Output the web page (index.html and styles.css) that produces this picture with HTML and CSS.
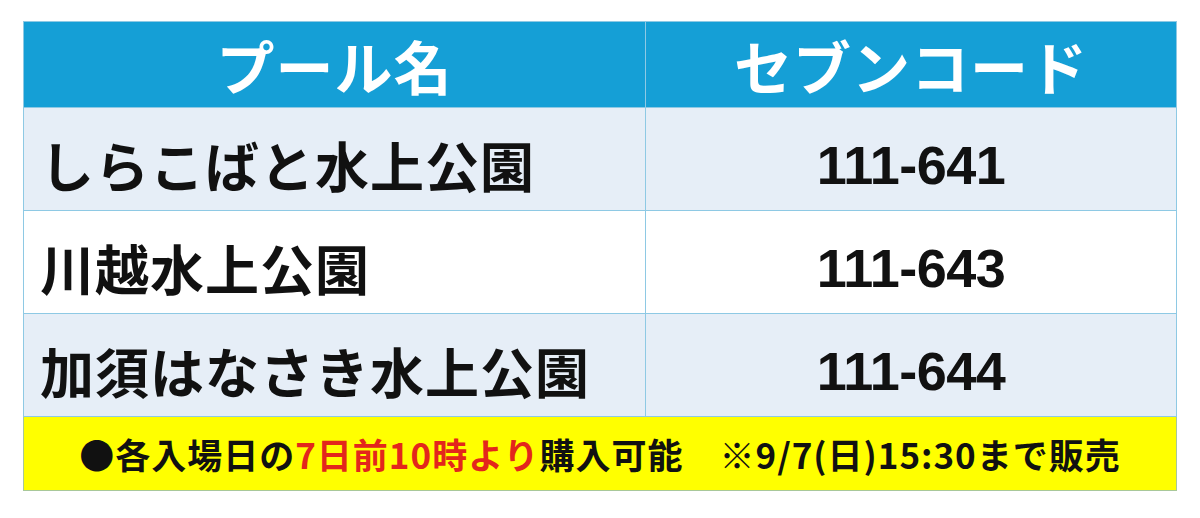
FILE: index.html
```html
<!DOCTYPE html>
<html lang="ja">
<head>
<meta charset="utf-8">
<title>セブンコード</title>
<link rel="stylesheet" href="styles.css">
</head>
<body>
<table class="codes">
  <thead>
    <tr class="head">
      <th class="col-name">プール名</th>
      <th class="col-code">セブンコード</th>
    </tr>
  </thead>
  <tbody>
    <tr class="row shade">
      <td class="name">しらこばと水上公園</td>
      <td class="code">111-641</td>
    </tr>
    <tr class="row">
      <td class="name">川越水上公園</td>
      <td class="code">111-643</td>
    </tr>
    <tr class="row shade">
      <td class="name">加須はなさき水上公園</td>
      <td class="code">111-644</td>
    </tr>
  </tbody>
  <tfoot>
    <tr class="note-row">
      <td class="note" colspan="2">●各入場日の<span class="red">7日前10時より</span>購入可能　※9/7(日)15:30まで販売</td>
    </tr>
  </tfoot>
</table>
</body>
</html>
```
FILE: styles.css
```css
html, body {
  margin: 0;
  padding: 0;
  background: #ffffff;
}

body {
  font-family: "Noto Sans CJK JP", "Noto Sans", sans-serif;
  color: #111111;
}

.codes {
  border-collapse: collapse;
  width: 1154px;
  margin: 21px 0 0 23px;
  table-layout: fixed;
}

.col-name {
  width: 621px;
}

.codes th,
.codes td {
  border: 1px solid #8ec9e4;
  padding: 0;
  line-height: 1;
}

.head th {
  height: 85px;
  background: #159fd6;
  color: #ffffff;
  font-size: 58px;
  font-weight: 700;
  letter-spacing: 1px;
  text-align: center;
  vertical-align: middle;
}

.row td {
  height: 90px;
  padding-top: 12px;
  background: #ffffff;
  vertical-align: middle;
}

.row.shade td {
  background: #e6eef7;
}

.name {
  padding-left: 16px !important;
  font-size: 54px;
  font-weight: 700;
  text-align: left;
  letter-spacing: 1px;
}

.code {
  font-family: "Liberation Sans", Arial, sans-serif;
  font-size: 54px;
  font-weight: 700;
  text-align: center;
  letter-spacing: -0.5px;
}

.note-row td {
  height: 73px;
  background: #ffff00;
  border: 1px solid #a8c89a;
  font-size: 35px;
  font-weight: 700;
  text-align: center;
  vertical-align: middle;
  letter-spacing: 1px;
}

.red {
  color: #e3261c;
}
```
